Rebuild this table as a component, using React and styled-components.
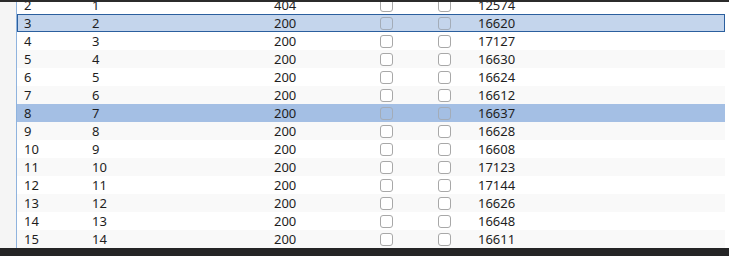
import React, { useLayoutEffect, useRef } from "react";
import styled, { createGlobalStyle } from "styled-components";

const Global = createGlobalStyle`
  html, body { margin: 0; padding: 0; background: #ffffff; }
  body { font-family: "Noto Sans", "Open Sans", sans-serif; }
  #root { width: 729px; height: 256px; }
`;

const Page = styled.div`
  width: 729px;
  height: 256px;
  display: flex;
  flex-direction: column;
  background: #ffffff;
  overflow: hidden;
`;

const TopBar = styled.div`
  height: 2px;
  flex: none;
  background: #2b2b2b;
`;

const BottomBar = styled.div`
  height: 8px;
  flex: none;
  background: #252526;
`;

const Body = styled.div`
  flex: 1;
  min-height: 0;
  display: flex;
`;

const Gutter = styled.div`
  width: 16px;
  flex: none;
  background: #f5f5f5;
  border-right: 1px solid #8fb3de;
`;

const Viewport = styled.div`
  width: 708px;
  flex: none;
  overflow: hidden;
`;

const Row = styled.div`
  display: grid;
  grid-template-columns: 68px 182px 106px 58px 40px 1fr;
  height: 18px;
  box-sizing: border-box;
  align-items: center;
  font-size: 13px;
  color: #1e1e1e;
  background: ${(p) =>
    p.$state === "focus"
      ? "#c4d5ec"
      : p.$state === "selected"
      ? "#a4bfe4"
      : p.$odd
      ? "#f9f9f9"
      : "#ffffff"};
  border: ${(p) => (p.$state === "focus" ? "1px solid #2b5f9e" : "none")};
  padding: ${(p) => (p.$state === "focus" ? "0" : "1px 0")};
`;

const Cell = styled.div`
  padding-left: ${(p) => (p.$focus ? "6px" : "7px")};
  line-height: 16px;
  white-space: nowrap;
  overflow: hidden;
`;

const CheckCell = styled.div`
  padding-left: ${(p) => (p.$focus ? "6px" : "7px")};
  display: flex;
  align-items: center;
`;

const Box = styled.span`
  display: block;
  width: 13px;
  height: 13px;
  box-sizing: border-box;
  border: 1px solid ${(p) => (p.$dim ? "#a3acb8" : "#a8a8a8")};
  border-radius: 3px;
  background: ${(p) => (p.$dim ? "transparent" : "#ffffff")};
`;

const rows = [
  [1, 0, 200, 16615],
  [2, 1, 404, 12574],
  [3, 2, 200, 16620],
  [4, 3, 200, 17127],
  [5, 4, 200, 16630],
  [6, 5, 200, 16624],
  [7, 6, 200, 16612],
  [8, 7, 200, 16637],
  [9, 8, 200, 16628],
  [10, 9, 200, 16608],
  [11, 10, 200, 17123],
  [12, 11, 200, 17144],
  [13, 12, 200, 16626],
  [14, 13, 200, 16648],
  [15, 14, 200, 16611],
];

export default function App() {
  const ref = useRef(null);
  useLayoutEffect(() => {
    if (ref.current) ref.current.scrollTop = 24;
  }, []);
  return (
    <>
      <Global />
      <Page>
        <TopBar />
        <Body>
          <Gutter />
          <Viewport ref={ref}>
            {rows.map(([n, idx, status, size]) => {
              const state = n === 3 ? "focus" : n === 8 ? "selected" : null;
              const focus = state === "focus";
              const dim = state !== null;
              return (
                <Row key={n} $state={state} $odd={n % 2 === 1}>
                  <Cell $focus={focus}>{n}</Cell>
                  <Cell $focus={focus}>{idx}</Cell>
                  <Cell $focus={focus}>{status}</Cell>
                  <CheckCell $focus={focus}>
                    <Box $dim={dim} />
                  </CheckCell>
                  <CheckCell $focus={focus}>
                    <Box $dim={dim} />
                  </CheckCell>
                  <Cell $focus={focus}>{size}</Cell>
                </Row>
              );
            })}
          </Viewport>
        </Body>
        <BottomBar />
      </Page>
    </>
  );
}
